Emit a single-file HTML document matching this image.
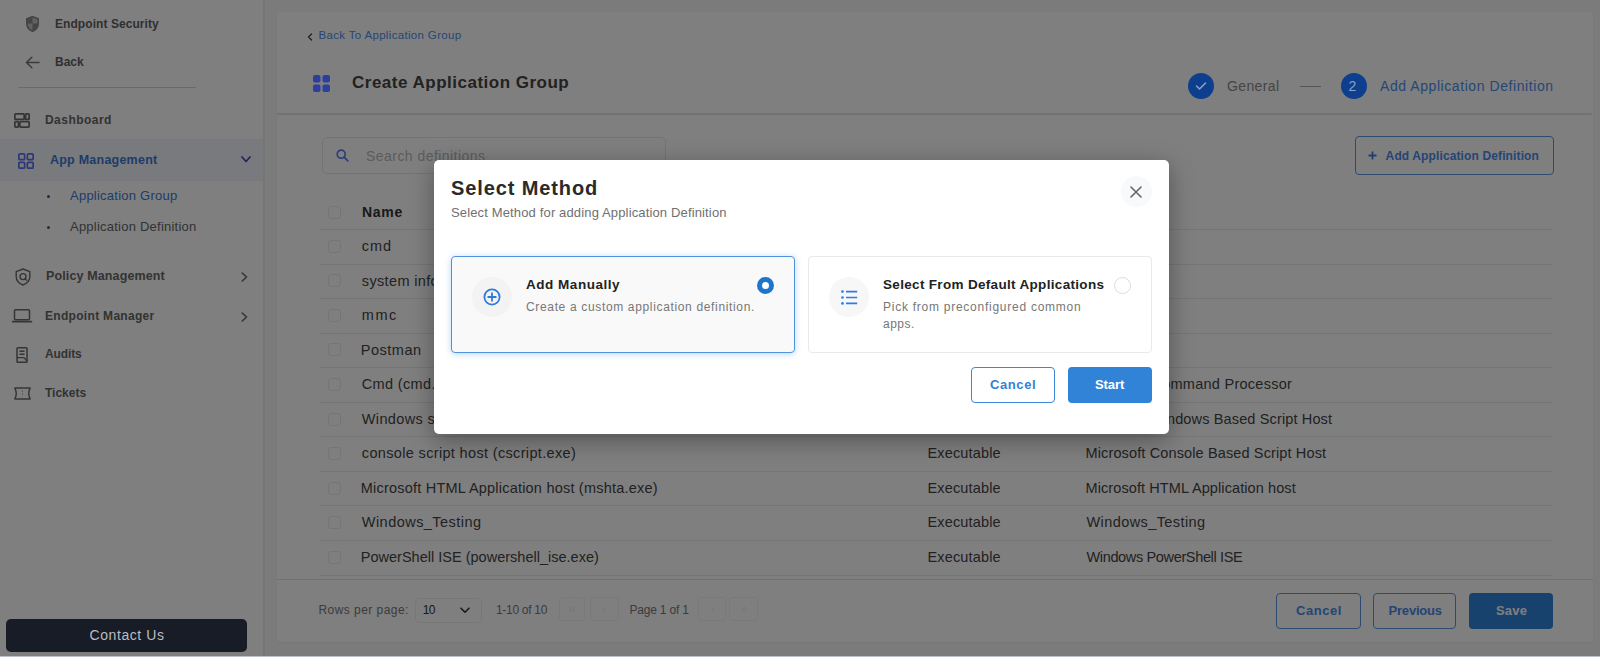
<!DOCTYPE html>
<html><head><meta charset="utf-8">
<style>
*{box-sizing:border-box;margin:0;padding:0}
html,body{width:1600px;height:657px;overflow:hidden;background:#f6f6f6;font-family:"Liberation Sans",sans-serif}
.a{position:absolute}
.t{position:absolute;white-space:pre;line-height:1;font-family:"Liberation Sans",sans-serif}
svg{position:absolute;overflow:visible}
#sidebar{left:0;top:0;width:263px;height:657px;background:#fff;border-right:2px solid #ececec;width:265px}
#card{left:277px;top:12px;width:1316px;height:630px;background:#fff;border-radius:3px;box-shadow:0 1px 2px rgba(0,0,0,.04)}
.hl{position:absolute;height:1px;background:#ebebeb}
.cb{position:absolute;width:13px;height:13px;border:1px solid #ebebeb;border-radius:3px;background:#fff}
.btn{position:absolute;border:1px solid #5a96e2;border-radius:4px}
#overlay{left:0;top:0;width:1600px;height:657px;background:rgba(0,0,0,.5)}
#modal{left:434px;top:160px;width:735px;height:274px;background:#fff;border-radius:5px;box-shadow:0 6px 24px rgba(0,0,0,.35)}
</style></head><body>
<div id="sidebar" class="a"></div>
<!-- active row -->
<div class="a" style="left:0;top:139px;width:263px;height:42px;background:#f3f5fd"></div>
<!-- sidebar divider -->
<div class="a" style="left:18px;top:86.5px;width:178px;height:1.5px;background:#d4d4d4"></div>

<!-- shield icon -->
<svg style="left:25px;top:15px" width="15" height="18" viewBox="0 0 15 18">
 <path d="M7.5 0.8 L14 3.2 V8.5 C14 12.8 11.2 15.8 7.5 17.2 C3.8 15.8 1 12.8 1 8.5 V3.2 Z" fill="#8a8a8a"/>
 <path d="M7.5 2.6 L12.3 4.4 V8.6 H7.5 Z" fill="#c4c4c4"/>
 <path d="M7.5 8.6 H2.7 C2.9 11.9 4.9 14.3 7.5 15.4 Z" fill="#c4c4c4"/>
</svg>
<!-- back arrow -->
<svg style="left:25px;top:56px" width="15" height="13" viewBox="0 0 15 13">
 <path d="M14 6.5 H1.5 M6.8 1.2 L1.5 6.5 L6.8 11.8" fill="none" stroke="#777" stroke-width="1.5" stroke-linecap="round" stroke-linejoin="round"/>
</svg>
<!-- dashboard icon -->
<svg style="left:14px;top:113px" width="16" height="15" viewBox="0 0 16 15">
 <g fill="none" stroke="#6a6a6a" stroke-width="1.7">
  <rect x="0.85" y="0.85" width="9.3" height="5.6" rx="0.8"/>
  <rect x="11.6" y="0.85" width="3.55" height="5.6" rx="0.8"/>
  <rect x="0.85" y="8.55" width="3.55" height="5.6" rx="0.8"/>
  <rect x="5.85" y="8.55" width="9.3" height="5.6" rx="0.8"/>
 </g>
</svg>
<!-- app mgmt icon -->
<svg style="left:18px;top:152.5px" width="16" height="16" viewBox="0 0 16 16">
 <g fill="none" stroke="#5a6ef0" stroke-width="1.7">
  <rect x="0.85" y="0.85" width="5.8" height="5.8" rx="1"/>
  <rect x="9.35" y="0.85" width="5.8" height="5.8" rx="1"/>
  <rect x="0.85" y="9.35" width="5.8" height="5.8" rx="1"/>
  <rect x="9.35" y="9.35" width="5.8" height="5.8" rx="1"/>
 </g>
</svg>
<svg style="left:241px;top:155.5px" width="10" height="7" viewBox="0 0 10 7">
 <path d="M1 1 L5 5.5 L9 1" fill="none" stroke="#4747c8" stroke-width="1.8" stroke-linecap="round" stroke-linejoin="round"/>
</svg>
<div class="a" style="left:46.5px;top:194.5px;width:3px;height:3px;border-radius:50%;background:#1f5fae"></div>
<div class="a" style="left:46.5px;top:225.5px;width:3px;height:3px;border-radius:50%;background:#555"></div>
<!-- policy icon -->
<svg style="left:15px;top:268px" width="16" height="18" viewBox="0 0 16 18">
 <path d="M8 1 L14.8 3.6 V8.6 C14.8 12.6 12 15.6 8 17 C4 15.6 1.2 12.6 1.2 8.6 V3.6 Z" fill="none" stroke="#6a6a6a" stroke-width="1.4" stroke-linejoin="round"/>
 <circle cx="8" cy="8.6" r="3" fill="none" stroke="#6a6a6a" stroke-width="1.4"/>
 <path d="M10.2 10.8 L11.6 12.2" stroke="#6a6a6a" stroke-width="1.4" stroke-linecap="round"/>
</svg>
<svg style="left:240.5px;top:272px" width="7" height="10" viewBox="0 0 7 10">
 <path d="M1.2 1 L5.6 5 L1.2 9" fill="none" stroke="#6a6a6a" stroke-width="1.6" stroke-linecap="round" stroke-linejoin="round"/>
</svg>
<!-- laptop icon -->
<svg style="left:12px;top:309px" width="20" height="14" viewBox="0 0 20 14">
 <rect x="2.5" y="0.8" width="15" height="10" rx="1" fill="none" stroke="#6a6a6a" stroke-width="1.5"/>
 <path d="M0.5 12.6 H19.5" stroke="#6a6a6a" stroke-width="1.6" stroke-linecap="round"/>
</svg>
<svg style="left:240.5px;top:311.5px" width="7" height="10" viewBox="0 0 7 10">
 <path d="M1.2 1 L5.6 5 L1.2 9" fill="none" stroke="#6a6a6a" stroke-width="1.6" stroke-linecap="round" stroke-linejoin="round"/>
</svg>
<!-- audits icon -->
<svg style="left:16px;top:347px" width="12" height="16" viewBox="0 0 12 16">
 <path d="M1 1.6 Q1 0.8 1.8 0.8 H10.2 Q11 0.8 11 1.6 V14.4 Q11 15.2 10.2 15.2 H1.8 Q1 15.2 1 14.4 Z" fill="none" stroke="#6a6a6a" stroke-width="1.5"/>
 <path d="M3.5 4.2 H8.5 M3.5 7.2 H8.5 M1 10.6 H7 C8.8 10.6 10 12.6 11 14.6" fill="none" stroke="#6a6a6a" stroke-width="1.4"/>
</svg>
<!-- tickets icon -->
<svg style="left:14px;top:387px" width="17" height="13" viewBox="0 0 17 13">
 <path d="M0.9 0.9 H16.1 C15.2 3.2 14.7 5 14.7 6.5 C14.7 8 15.2 9.8 16.1 12.1 H0.9 C1.8 9.8 2.3 8 2.3 6.5 C2.3 5 1.8 3.2 0.9 0.9 Z" fill="none" stroke="#6a6a6a" stroke-width="1.5" stroke-linejoin="round"/>
 <path d="M8.5 3.5 V9.5" stroke="#999" stroke-width="1" stroke-dasharray="1.3 1.5"/>
</svg>

<!-- main card -->
<div id="card" class="a"></div>
<div class="hl" style="left:277px;top:113px;width:1315px;height:2px;background:#e4e4e4;border-radius:0 0 2px 0"></div>
<svg style="left:307px;top:33px" width="6" height="8" viewBox="0 0 6 8">
 <path d="M4.5 1 L1.5 4 L4.5 7" fill="none" stroke="#444" stroke-width="1.4" stroke-linecap="round" stroke-linejoin="round"/>
</svg>
<div class="a" style="left:1300px;top:85.5px;width:21px;height:1.5px;background:#aaa"></div>
<!-- search box -->
<div class="a" style="left:322px;top:137px;width:344px;height:37px;border:1px solid #e6e6e6;border-radius:5px"></div>
<svg style="left:336px;top:149px" width="13" height="13" viewBox="0 0 13 13">
 <circle cx="5.2" cy="5.2" r="4" fill="none" stroke="#5a7cf5" stroke-width="1.7"/>
 <path d="M8.2 8.2 L11.8 11.8" stroke="#5a7cf5" stroke-width="1.8" stroke-linecap="round"/>
</svg>
<!-- add def button -->
<div class="btn" style="left:1355px;top:136px;width:199px;height:39px"></div>
<svg style="left:1367.5px;top:150.5px" width="9" height="9" viewBox="0 0 9 9">
 <path d="M4.5 0.5 V8.5 M0.5 4.5 H8.5" stroke="#3f80d8" stroke-width="1.8"/>
</svg>

<!-- table -->
<div class="cb" style="left:328px;top:205.5px"></div>
<div class="hl" style="left:320px;top:229.00px;width:1232px"></div>
<div class="hl" style="left:320px;top:263.55px;width:1232px"></div>
<div class="hl" style="left:320px;top:298.10px;width:1232px"></div>
<div class="hl" style="left:320px;top:332.65px;width:1232px"></div>
<div class="hl" style="left:320px;top:367.20px;width:1232px"></div>
<div class="hl" style="left:320px;top:401.75px;width:1232px"></div>
<div class="hl" style="left:320px;top:436.30px;width:1232px"></div>
<div class="hl" style="left:320px;top:470.85px;width:1232px"></div>
<div class="hl" style="left:320px;top:505.40px;width:1232px"></div>
<div class="hl" style="left:320px;top:539.95px;width:1232px"></div>
<div class="hl" style="left:320px;top:574.50px;width:1232px"></div>
<div class="cb" style="left:328px;top:239.80px"></div>
<div class="cb" style="left:328px;top:274.35px"></div>
<div class="cb" style="left:328px;top:308.90px"></div>
<div class="cb" style="left:328px;top:343.45px"></div>
<div class="cb" style="left:328px;top:378.00px"></div>
<div class="cb" style="left:328px;top:412.55px"></div>
<div class="cb" style="left:328px;top:447.10px"></div>
<div class="cb" style="left:328px;top:481.65px"></div>
<div class="cb" style="left:328px;top:516.20px"></div>
<div class="cb" style="left:328px;top:550.75px"></div>
<div class="hl" style="left:277px;top:579px;width:1316px;background:#e4e4e4"></div>

<!-- footer -->
<div class="a" style="left:415px;top:598px;width:67px;height:25px;border:1px solid #eeeeee;border-radius:4px"></div>
<svg style="left:459.5px;top:607px" width="10" height="7" viewBox="0 0 10 7">
 <path d="M1 1.2 L5 5.2 L9 1.2" fill="none" stroke="#333" stroke-width="1.6" stroke-linecap="round" stroke-linejoin="round"/>
</svg>
<div class="a" style="left:559px;top:597px;width:26px;height:24px;border:1px solid #f3f3f3;border-radius:3px"></div>
<div class="a" style="left:590px;top:597px;width:29px;height:24px;border:1px solid #f3f3f3;border-radius:3px"></div>
<div class="a" style="left:698px;top:597px;width:28px;height:24px;border:1px solid #f3f3f3;border-radius:3px"></div>
<div class="a" style="left:729px;top:597px;width:29px;height:24px;border:1px solid #f3f3f3;border-radius:3px"></div>
<svg style="left:568px;top:606px" width="8" height="7" viewBox="0 0 8 7"><path d="M4 1 L1.5 3.5 L4 6 M7 1 L4.5 3.5 L7 6" fill="none" stroke="#e6e6e6" stroke-width="1"/></svg>
<svg style="left:602px;top:606px" width="5" height="7" viewBox="0 0 5 7"><path d="M3.5 1 L1 3.5 L3.5 6" fill="none" stroke="#e6e6e6" stroke-width="1"/></svg>
<svg style="left:710px;top:606px" width="5" height="7" viewBox="0 0 5 7"><path d="M1.5 1 L4 3.5 L1.5 6" fill="none" stroke="#e6e6e6" stroke-width="1"/></svg>
<svg style="left:740px;top:606px" width="8" height="7" viewBox="0 0 8 7"><path d="M1 1 L3.5 3.5 L1 6 M4 1 L6.5 3.5 L4 6" fill="none" stroke="#e6e6e6" stroke-width="1"/></svg>
<div class="btn" style="left:1276px;top:593px;width:84.5px;height:35.5px"></div>
<div class="btn" style="left:1373px;top:593px;width:82.5px;height:35.5px"></div>
<div class="a" style="left:1469px;top:593px;width:84px;height:35.5px;background:#2f84dc;border-radius:4px"></div>

<span class="t" style="left:55.00px;top:17.84px;font-size:12px;font-weight:700;color:#606060;letter-spacing:0.062px;">Endpoint Security</span>
<span class="t" style="left:55.00px;top:55.84px;font-size:12px;font-weight:700;color:#606060;letter-spacing:-0.005px;">Back</span>
<span class="t" style="left:45.00px;top:114.34px;font-size:12px;font-weight:700;color:#666;letter-spacing:0.457px;">Dashboard</span>
<span class="t" style="left:50.00px;top:154.02px;font-size:12.5px;font-weight:700;color:#3a7ad0;letter-spacing:0.230px;">App Management</span>
<span class="t" style="left:70.00px;top:189.00px;font-size:13px;font-weight:400;color:#3a7ad8;letter-spacing:0.243px;">Application Group</span>
<span class="t" style="left:70.00px;top:220.00px;font-size:13px;font-weight:400;color:#666;letter-spacing:0.230px;">Application Definition</span>
<span class="t" style="left:46.00px;top:270.42px;font-size:12.5px;font-weight:700;color:#666;letter-spacing:0.129px;">Policy Management</span>
<span class="t" style="left:45.00px;top:310.44px;font-size:12px;font-weight:700;color:#666;letter-spacing:0.307px;">Endpoint Manager</span>
<span class="t" style="left:45.00px;top:347.84px;font-size:12px;font-weight:700;color:#666;letter-spacing:-0.131px;">Audits</span>
<span class="t" style="left:45.00px;top:386.84px;font-size:12px;font-weight:700;color:#666;letter-spacing:-0.011px;">Tickets</span>
<span class="t" style="left:318.50px;top:30.27px;font-size:11.5px;font-weight:400;color:#4a8ef0;letter-spacing:0.332px;">Back To Application Group</span>
<span class="t" style="left:352.00px;top:74.11px;font-size:17px;font-weight:700;color:#444;letter-spacing:0.499px;">Create Application Group</span>
<span class="t" style="left:1227.00px;top:78.55px;font-size:14px;font-weight:400;color:#8a8a8a;letter-spacing:0.384px;">General</span>
<span class="t" style="left:1380.00px;top:78.85px;font-size:14px;font-weight:400;color:#4a8ef0;letter-spacing:0.570px;">Add Application Definition</span>
<span class="t" style="left:366.00px;top:148.65px;font-size:14px;font-weight:400;color:#b8b8b8;letter-spacing:0.454px;">Search definitions</span>
<span class="t" style="left:1385.60px;top:149.54px;font-size:12px;font-weight:700;color:#4a8ae8;letter-spacing:0.123px;">Add Application Definition</span>
<span class="t" style="left:362.00px;top:204.90px;font-size:14px;font-weight:700;color:#333;letter-spacing:0.718px;">Name</span>
<span class="t" style="left:361.80px;top:239.03px;font-size:14.5px;font-weight:400;color:#444;letter-spacing:0.936px;">cmd</span>
<span class="t" style="left:361.80px;top:273.58px;font-size:14.5px;font-weight:400;color:#444;letter-spacing:0.350px;">system information</span>
<span class="t" style="left:361.80px;top:308.13px;font-size:14.5px;font-weight:400;color:#444;letter-spacing:1.521px;">mmc</span>
<span class="t" style="left:360.80px;top:342.68px;font-size:14.5px;font-weight:400;color:#444;letter-spacing:0.507px;">Postman</span>
<span class="t" style="left:361.80px;top:377.23px;font-size:14.5px;font-weight:400;color:#444;letter-spacing:0.350px;">Cmd (cmd.exe)</span>
<span class="t" style="left:927.50px;top:377.23px;font-size:14.5px;font-weight:400;color:#444;letter-spacing:0.147px;">Executable</span>
<span class="t" style="left:1086.50px;top:377.23px;font-size:14.5px;font-weight:400;color:#444;letter-spacing:0.262px;">Windows Command Processor</span>
<span class="t" style="left:361.80px;top:411.78px;font-size:14.5px;font-weight:400;color:#444;letter-spacing:0.350px;">Windows script host (wscript.exe)</span>
<span class="t" style="left:927.50px;top:411.78px;font-size:14.5px;font-weight:400;color:#444;letter-spacing:0.147px;">Executable</span>
<span class="t" style="left:1085.50px;top:411.78px;font-size:14.5px;font-weight:400;color:#444;letter-spacing:0.141px;">Microsoft Windows Based Script Host</span>
<span class="t" style="left:361.80px;top:446.33px;font-size:14.5px;font-weight:400;color:#444;letter-spacing:0.342px;">console script host (cscript.exe)</span>
<span class="t" style="left:927.50px;top:446.33px;font-size:14.5px;font-weight:400;color:#444;letter-spacing:0.147px;">Executable</span>
<span class="t" style="left:1085.50px;top:446.33px;font-size:14.5px;font-weight:400;color:#444;letter-spacing:0.130px;">Microsoft Console Based Script Host</span>
<span class="t" style="left:360.80px;top:480.88px;font-size:14.5px;font-weight:400;color:#444;letter-spacing:0.208px;">Microsoft HTML Application host (mshta.exe)</span>
<span class="t" style="left:927.50px;top:480.88px;font-size:14.5px;font-weight:400;color:#444;letter-spacing:0.147px;">Executable</span>
<span class="t" style="left:1085.50px;top:480.88px;font-size:14.5px;font-weight:400;color:#444;letter-spacing:0.094px;">Microsoft HTML Application host</span>
<span class="t" style="left:361.80px;top:515.43px;font-size:14.5px;font-weight:400;color:#444;letter-spacing:0.460px;">Windows_Testing</span>
<span class="t" style="left:927.50px;top:515.43px;font-size:14.5px;font-weight:400;color:#444;letter-spacing:0.147px;">Executable</span>
<span class="t" style="left:1086.50px;top:515.43px;font-size:14.5px;font-weight:400;color:#444;letter-spacing:0.410px;">Windows_Testing</span>
<span class="t" style="left:360.80px;top:549.98px;font-size:14.5px;font-weight:400;color:#444;letter-spacing:0.008px;">PowerShell ISE (powershell_ise.exe)</span>
<span class="t" style="left:927.50px;top:549.98px;font-size:14.5px;font-weight:400;color:#444;letter-spacing:0.147px;">Executable</span>
<span class="t" style="left:1086.50px;top:549.98px;font-size:14.5px;font-weight:400;color:#444;letter-spacing:-0.353px;">Windows PowerShell ISE</span>
<span class="t" style="left:318.50px;top:603.84px;font-size:12px;font-weight:400;color:#777;letter-spacing:0.445px;">Rows per page:</span>
<span class="t" style="left:422.80px;top:603.84px;font-size:12px;font-weight:400;color:#333;letter-spacing:-0.600px;">10</span>
<span class="t" style="left:496.00px;top:603.84px;font-size:12px;font-weight:400;color:#777;letter-spacing:-0.300px;">1-10 of 10</span>
<span class="t" style="left:629.50px;top:603.84px;font-size:12px;font-weight:400;color:#777;letter-spacing:-0.200px;">Page 1 of 1</span>
<span class="t" style="left:1296.00px;top:604.00px;font-size:13px;font-weight:700;color:#4a8ae8;letter-spacing:0.536px;">Cancel</span>
<span class="t" style="left:1388.60px;top:604.00px;font-size:13px;font-weight:700;color:#4a8ae8;letter-spacing:-0.226px;">Previous</span>
<span class="t" style="left:1495.90px;top:604.00px;font-size:13px;font-weight:700;color:#ffffff;letter-spacing:0.223px;">Save</span>

<div id="overlay" class="a"></div>

<!-- stepper -->
<div class="a" style="left:1188px;top:73px;width:26px;height:26px;border-radius:50%;background:#0e3e8e"></div>
<svg style="left:1195px;top:81px" width="12" height="10" viewBox="0 0 12 10">
 <path d="M1.5 5 L4.5 8 L10.5 2" fill="none" stroke="#8aa0c4" stroke-width="1.6" stroke-linecap="round" stroke-linejoin="round"/>
</svg>
<div class="a" style="left:1340.5px;top:73px;width:26px;height:26px;border-radius:50%;background:#0e3e8e"></div>
<span class="t" style="left:1348.5px;top:79px;font-size:14px;color:#8aa0c4">2</span>

<svg style="left:313px;top:75px" width="17" height="17" viewBox="0 0 17 17">
 <g fill="#2c3f9c">
  <rect x="0" y="0" width="7.5" height="7.5" rx="2"/>
  <rect x="9.5" y="0" width="7.5" height="7.5" rx="2"/>
  <rect x="0" y="9.5" width="7.5" height="7.5" rx="2"/>
  <rect x="9.5" y="9.5" width="7.5" height="7.5" rx="2"/>
 </g>
</svg>
<div id="modal" class="a"></div>
<!-- close -->
<div class="a" style="left:1120.5px;top:175.5px;width:31px;height:31px;border-radius:50%;background:#f8f9fa"></div>
<svg style="left:1130px;top:186px" width="12" height="12" viewBox="0 0 12 12">
 <path d="M1 1 L11 11 M11 1 L1 11" stroke="#666" stroke-width="1.6" stroke-linecap="round"/>
</svg>
<!-- card1 -->
<div class="a" style="left:451px;top:256px;width:344px;height:97px;border:1px solid #4f93e0;border-radius:4px;background:#f9f9fa;box-shadow:0 1px 6px rgba(60,140,230,.35)"></div>
<div class="a" style="left:472px;top:277px;width:40px;height:40px;border-radius:50%;background:#f3f3f4"></div>
<svg style="left:483px;top:288px" width="18" height="18" viewBox="0 0 18 18">
 <circle cx="9" cy="9" r="7.6" fill="none" stroke="#2f7bd9" stroke-width="1.8"/>
 <path d="M9 5.2 V12.8 M5.2 9 H12.8" stroke="#2f7bd9" stroke-width="1.8" stroke-linecap="round"/>
</svg>
<div class="a" style="left:756.5px;top:276.5px;width:17px;height:17px;border-radius:50%;border:5px solid #1f74cc;background:#fff"></div>
<!-- card2 -->
<div class="a" style="left:808px;top:256px;width:343.5px;height:97px;border:1px solid #e9e9e9;border-radius:4px;background:#fff"></div>
<div class="a" style="left:828.5px;top:276.5px;width:40px;height:40px;border-radius:50%;background:#f7f7f8"></div>
<svg style="left:840.5px;top:289.5px" width="17" height="15" viewBox="0 0 17 15">
 <g fill="#2f7bd9"><circle cx="1.5" cy="1.6" r="1.3"/><circle cx="1.5" cy="7.5" r="1.3"/><circle cx="1.5" cy="13.4" r="1.3"/></g>
 <path d="M5 1.6 H16.2 M5 7.5 H16.2 M5 13.4 H16.2" stroke="#2f7bd9" stroke-width="1.6"/>
</svg>
<div class="a" style="left:1113.5px;top:276.5px;width:17px;height:17px;border-radius:50%;border:1px solid #dcdcdc;background:#fff"></div>
<!-- buttons -->
<div class="a" style="left:970.5px;top:366.5px;width:84.5px;height:36.5px;border:1px solid #3a86d8;border-radius:4px;background:#fff"></div>
<div class="a" style="left:1068px;top:366.5px;width:84px;height:36.5px;border-radius:4px;background:#3183d8"></div>
<span class="t" style="left:451.00px;top:177.57px;font-size:20px;font-weight:700;color:#2a2a2a;letter-spacing:0.887px;">Select Method</span>
<span class="t" style="left:451.00px;top:206.00px;font-size:13px;font-weight:400;color:#707070;letter-spacing:0.145px;">Select Method for adding Application Definition</span>
<span class="t" style="left:526.00px;top:277.57px;font-size:13.5px;font-weight:700;color:#222;letter-spacing:0.523px;">Add Manually</span>
<span class="t" style="left:526.00px;top:300.64px;font-size:12px;font-weight:400;color:#777;letter-spacing:0.655px;">Create a custom application definition.</span>
<span class="t" style="left:883.00px;top:277.57px;font-size:13.5px;font-weight:700;color:#222;letter-spacing:0.322px;">Select From Default Applications</span>
<span class="t" style="left:883.00px;top:300.84px;font-size:12px;font-weight:400;color:#777;letter-spacing:0.745px;">Pick from preconfigured common</span>
<span class="t" style="left:883.00px;top:317.84px;font-size:12px;font-weight:400;color:#777;letter-spacing:0.495px;">apps.</span>
<span class="t" style="left:990.00px;top:377.80px;font-size:13px;font-weight:700;color:#3182d6;letter-spacing:0.596px;">Cancel</span>
<span class="t" style="left:1095.00px;top:377.80px;font-size:13px;font-weight:700;color:#ffffff;letter-spacing:-0.072px;">Start</span>

<div class="a" style="left:6px;top:618.5px;width:241px;height:33.5px;border-radius:5px;background:#171c26"></div>
<span class="t" style="left:89.50px;top:628.15px;font-size:14px;font-weight:400;color:#b9bdc3;letter-spacing:0.584px;">Contact Us</span>
<div class="a" style="left:0;top:655.5px;width:1600px;height:1.5px;background:#bcc0cc"></div>
</body></html>
